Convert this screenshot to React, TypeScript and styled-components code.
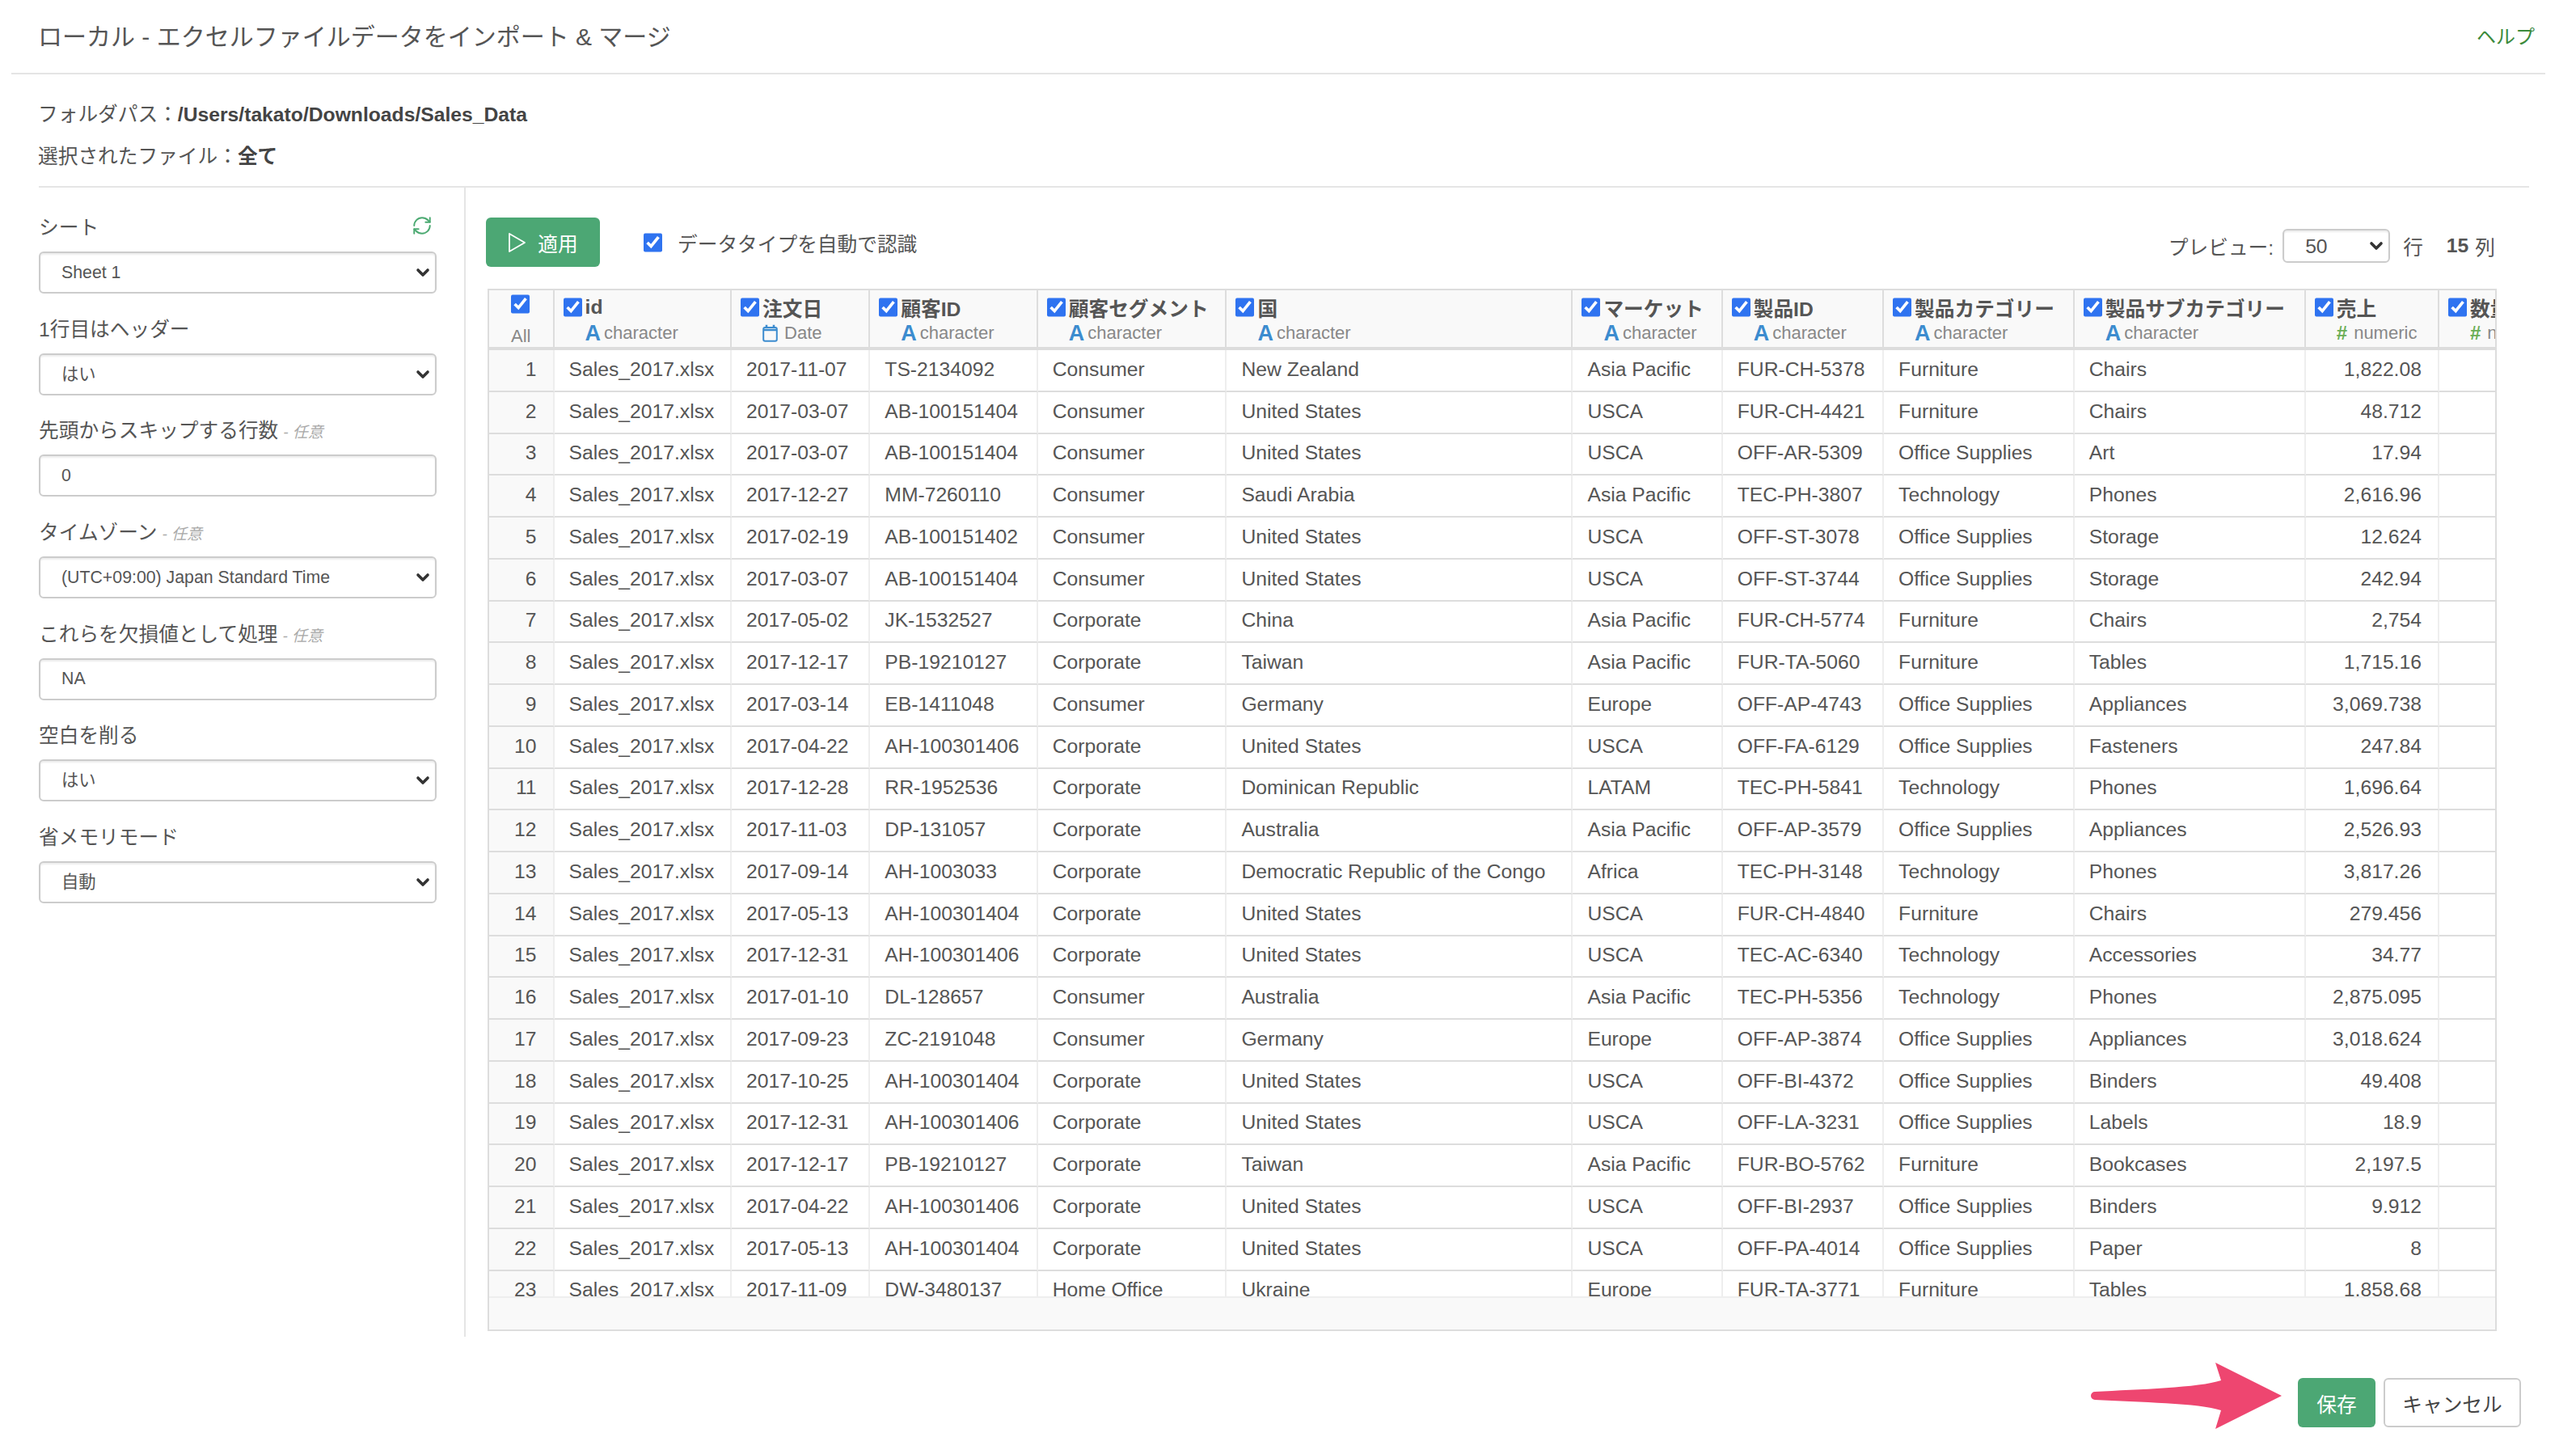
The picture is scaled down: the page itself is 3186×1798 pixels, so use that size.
import styled, { createGlobalStyle } from 'styled-components';
import { ChevronDown, RefreshCw } from 'lucide-react';

const GlobalStyle = createGlobalStyle`
  * {
    box-sizing: border-box;
  }
  html,
  body {
    margin: 0;
    padding: 0;
    background: #fff;
  }
  body {
    font-family: 'Liberation Sans', 'Noto Sans CJK JP', sans-serif;
    font-size: 24.7px;
    color: #555;
  }
`;

const Page = styled.div`
  width: 3186px;
  height: 1798px;
  overflow: hidden;
`;

const Header = styled.header`
  height: 92px;
  margin: 0 38px 0 14px;
  padding: 0 13px 4px 33px;
  border-bottom: 2px solid #e5e5e5;
  display: flex;
  align-items: center;
  justify-content: space-between;
`;

const Title = styled.h1`
  margin: 0;
  font-size: 30px;
  font-weight: 400;
  color: #555;
`;

const HelpLink = styled.a`
  font-size: 24px;
  color: #3c8a3c;
`;

const Info = styled.section`
  height: 140px;
  margin: 0 58px 0 48px;
  padding-top: 24px;
  border-bottom: 2px solid #e5e5e5;
`;

const InfoLine = styled.div`
  height: 52px;
  line-height: 52px;
  margin-left: -1px;
  strong {
    color: #444;
  }
`;

const Body = styled.div`
  height: 1421px;
  display: flex;
`;

const Sidebar = styled.aside`
  width: 576px;
  padding: 27px 34px 0 48px;
  border-right: 2px solid #e5e5e5;
`;

const Field = styled.div`
  margin-bottom: 21.7px;
`;

const FieldLabel = styled.label`
  height: 40px;
  margin-bottom: 12px;
  padding-right: 5px;
  display: flex;
  align-items: center;
  justify-content: space-between;
`;

const Optional = styled.em`
  margin-left: 6px;
  font-size: 19px;
  color: #aaa;
`;

const LabelText = styled.span`
  display: flex;
  align-items: baseline;
`;

const SelectWrap = styled.div<{ $width?: number }>`
  position: relative;
  width: ${({ $width }) => ($width ? `${$width}px` : '100%')};
  svg {
    position: absolute;
    top: 50%;
    right: 5px;
    margin-top: -12px;
    color: #333;
    pointer-events: none;
  }
`;

const Select = styled.select`
  width: 100%;
  height: 52px;
  padding: 0 26px;
  appearance: none;
  background: #fff;
  border: 2px solid #ccc;
  border-radius: 6px;
  box-shadow: inset 0 2px 2px rgba(0, 0, 0, 0.075);
  font-family: inherit;
  font-size: 21.3px;
  color: #555;
`;

const PreviewSelect = styled(Select)`
  height: 42px;
  font-size: 24.7px;
`;

const TextInput = styled.input`
  width: 100%;
  height: 52px;
  padding: 0 26px;
  background: #fff;
  border: 2px solid #ccc;
  border-radius: 6px;
  box-shadow: inset 0 2px 2px rgba(0, 0, 0, 0.075);
  font-family: inherit;
  font-size: 21.3px;
  color: #555;
`;

const Main = styled.main`
  width: 2610px;
  padding: 37px 0 0 27px;
  margin-right: 0;
`;

const Toolbar = styled.div`
  width: 2485px;
  height: 61px;
  margin: 0 0 27px -2px;
  display: flex;
  align-items: center;
`;

const Button = styled.button<{ $primary?: boolean }>`
  height: 61px;
  display: inline-flex;
  align-items: center;
  justify-content: center;
  border-radius: 6px;
  font-family: inherit;
  font-size: 24.7px;
  border: ${({ $primary }) => ($primary ? 'none' : '2px solid #ccc')};
  background: ${({ $primary }) => ($primary ? '#4ca774' : '#fff')};
  color: ${({ $primary }) => ($primary ? '#fff' : '#444')};
`;

const ApplyButton = styled(Button)`
  width: 141px;
  gap: 14px;
`;

const SaveButton = styled(Button)`
  width: 96px;
`;

const CancelButton = styled(Button)`
  width: 170px;
`;

const AutoDetect = styled.label`
  margin-left: 54px;
  display: flex;
  align-items: center;
  gap: 19px;
`;

const Check = styled.input.attrs({ type: 'checkbox', defaultChecked: true })`
  width: 23px;
  height: 24px;
  margin: 0;
  flex: none;
  accent-color: #2f73f0;
`;

const PreviewGroup = styled.div`
  margin: 9px 0 0 auto;
  display: flex;
  align-items: center;
  strong {
    margin: 0 8px 0 29px;
  }
`;

const PreviewLabel = styled.span`
  margin-right: 11px;
`;

const UnitText = styled.span`
  margin-left: 16px;
`;

const TableFrame = styled.div`
  width: 2485px;
  height: 1289px;
  border: 2px solid #ddd;
  display: flex;
  flex-direction: column;
  background: #f9f9f9;
`;

const ScrollArea = styled.div`
  flex: 1;
  min-height: 0;
  overflow: hidden;
  background: #fff;
`;

const FootBar = styled.div`
  height: 41px;
  flex: none;
  background: #f9f9f9;
  border-top: 2px solid #eee;
`;

const Grid = styled.table`
  width: 2553px;
  table-layout: fixed;
  border-collapse: separate;
  border-spacing: 0;
`;

const Col = styled.col<{ $w: number }>`
  width: ${({ $w }) => $w}px;
`;

const HeadCell = styled.th`
  height: 73px;
  padding: 9px 0 0 11px;
  vertical-align: top;
  text-align: left;
  background: #f9f9f9;
  border-right: 2px solid #ddd;
  border-bottom: 4px solid #ddd;
  font-weight: 700;
  color: #555;
  white-space: nowrap;
  overflow: hidden;
`;

const AllCell = styled(HeadCell)`
  padding: 5px 0 0 27px;
`;

const AllText = styled.div`
  width: 24px;
  margin-top: 9px;
  font-size: 22px;
  font-weight: 400;
  color: #888;
  text-align: center;
`;

const HeadName = styled.div`
  height: 24px;
  display: flex;
  align-items: center;
  gap: 4px;
`;

const TypeRow = styled.div`
  margin: 7px 0 0 27px;
  height: 26px;
  display: flex;
  align-items: center;
  gap: 4px;
  font-size: 22px;
  font-weight: 400;
  color: #888;
`;

const TypeMark = styled.span<{ $color: string }>`
  font-size: 27px;
  font-weight: 700;
  color: ${({ $color }) => $color};
`;

const NumberMark = styled(TypeMark)`
  margin-right: 4px;
  font-size: 24px;
`;

const DateMark = styled.svg`
  width: 19px;
  height: 22px;
  margin-right: 4px;
  color: #3c8ccf;
`;

const Cell = styled.td<{ $right?: boolean }>`
  height: 51.75px;
  padding: 0 ${({ $right }) => ($right ? '20px' : '0 0 18px')};
  padding-bottom: 2px;
  border-right: 2px solid #eee;
  border-bottom: 2px solid #ddd;
  text-align: ${({ $right }) => ($right ? 'right' : 'left')};
  white-space: nowrap;
  overflow: hidden;
`;

const IndexCell = styled(Cell)`
  background: #f9f9f9;
`;

const Footer = styled.footer`
  position: relative;
  padding: 51px 68px 0 0;
  display: flex;
  justify-content: flex-end;
  gap: 10px;
`;

const Arrow = styled.svg`
  position: absolute;
  top: 31px;
  left: 2585px;
  width: 240px;
  height: 84px;
`;

type ColumnType = 'character' | 'Date' | 'numeric';

const columns: { name: string; type: ColumnType; width: number }[] = [
  { name: 'id', type: 'character', width: 218 },
  { name: '注文日', type: 'Date', width: 170 },
  { name: '顧客ID', type: 'character', width: 206 },
  { name: '顧客セグメント', type: 'character', width: 232 },
  { name: '国', type: 'character', width: 425 },
  { name: 'マーケット', type: 'character', width: 184 },
  { name: '製品ID', type: 'character', width: 198 },
  { name: '製品カテゴリー', type: 'character', width: 234 },
  { name: '製品サブカテゴリー', type: 'character', width: 284 },
  { name: '売上', type: 'numeric', width: 164 },
  { name: '数量', type: 'numeric', width: 140 },
];

const rows = [
  ['2017-11-07', 'TS-2134092', 'Consumer', 'New Zealand', 'Asia Pacific', 'FUR-CH-5378', 'Furniture', 'Chairs', '1,822.08'],
  ['2017-03-07', 'AB-100151404', 'Consumer', 'United States', 'USCA', 'FUR-CH-4421', 'Furniture', 'Chairs', '48.712'],
  ['2017-03-07', 'AB-100151404', 'Consumer', 'United States', 'USCA', 'OFF-AR-5309', 'Office Supplies', 'Art', '17.94'],
  ['2017-12-27', 'MM-7260110', 'Consumer', 'Saudi Arabia', 'Asia Pacific', 'TEC-PH-3807', 'Technology', 'Phones', '2,616.96'],
  ['2017-02-19', 'AB-100151402', 'Consumer', 'United States', 'USCA', 'OFF-ST-3078', 'Office Supplies', 'Storage', '12.624'],
  ['2017-03-07', 'AB-100151404', 'Consumer', 'United States', 'USCA', 'OFF-ST-3744', 'Office Supplies', 'Storage', '242.94'],
  ['2017-05-02', 'JK-1532527', 'Corporate', 'China', 'Asia Pacific', 'FUR-CH-5774', 'Furniture', 'Chairs', '2,754'],
  ['2017-12-17', 'PB-19210127', 'Corporate', 'Taiwan', 'Asia Pacific', 'FUR-TA-5060', 'Furniture', 'Tables', '1,715.16'],
  ['2017-03-14', 'EB-1411048', 'Consumer', 'Germany', 'Europe', 'OFF-AP-4743', 'Office Supplies', 'Appliances', '3,069.738'],
  ['2017-04-22', 'AH-100301406', 'Corporate', 'United States', 'USCA', 'OFF-FA-6129', 'Office Supplies', 'Fasteners', '247.84'],
  ['2017-12-28', 'RR-1952536', 'Corporate', 'Dominican Republic', 'LATAM', 'TEC-PH-5841', 'Technology', 'Phones', '1,696.64'],
  ['2017-11-03', 'DP-131057', 'Corporate', 'Australia', 'Asia Pacific', 'OFF-AP-3579', 'Office Supplies', 'Appliances', '2,526.93'],
  ['2017-09-14', 'AH-1003033', 'Corporate', 'Democratic Republic of the Congo', 'Africa', 'TEC-PH-3148', 'Technology', 'Phones', '3,817.26'],
  ['2017-05-13', 'AH-100301404', 'Corporate', 'United States', 'USCA', 'FUR-CH-4840', 'Furniture', 'Chairs', '279.456'],
  ['2017-12-31', 'AH-100301406', 'Corporate', 'United States', 'USCA', 'TEC-AC-6340', 'Technology', 'Accessories', '34.77'],
  ['2017-01-10', 'DL-128657', 'Consumer', 'Australia', 'Asia Pacific', 'TEC-PH-5356', 'Technology', 'Phones', '2,875.095'],
  ['2017-09-23', 'ZC-2191048', 'Consumer', 'Germany', 'Europe', 'OFF-AP-3874', 'Office Supplies', 'Appliances', '3,018.624'],
  ['2017-10-25', 'AH-100301404', 'Corporate', 'United States', 'USCA', 'OFF-BI-4372', 'Office Supplies', 'Binders', '49.408'],
  ['2017-12-31', 'AH-100301406', 'Corporate', 'United States', 'USCA', 'OFF-LA-3231', 'Office Supplies', 'Labels', '18.9'],
  ['2017-12-17', 'PB-19210127', 'Corporate', 'Taiwan', 'Asia Pacific', 'FUR-BO-5762', 'Furniture', 'Bookcases', '2,197.5'],
  ['2017-04-22', 'AH-100301406', 'Corporate', 'United States', 'USCA', 'OFF-BI-2937', 'Office Supplies', 'Binders', '9.912'],
  ['2017-05-13', 'AH-100301404', 'Corporate', 'United States', 'USCA', 'OFF-PA-4014', 'Office Supplies', 'Paper', '8'],
  ['2017-11-09', 'DW-3480137', 'Home Office', 'Ukraine', 'Europe', 'FUR-TA-3771', 'Furniture', 'Tables', '1,858.68'],
];

const TypeIcon = ({ type }: { type: ColumnType }) => {
  if (type === 'character') return <TypeMark $color="#3c8ccf">A</TypeMark>;
  if (type === 'numeric') return <NumberMark $color="#6aae55">#</NumberMark>;
  return (
    <DateMark viewBox="0 0 19 22" fill="none" stroke="currentColor">
      <rect x="1.2" y="4" width="16.6" height="16.8" rx="2" strokeWidth="2" />
      <path d="M1.5 7h16" strokeWidth="2.5" />
      <path d="M5 .8v4M14 .8v4" strokeWidth="2.6" />
    </DateMark>
  );
};

const SelectBox = ({ value, options }: { value: string; options?: string[] }) => (
  <SelectWrap>
    <Select defaultValue={value}>
      {(options ?? [value]).map((o) => (
        <option key={o}>{o}</option>
      ))}
    </Select>
    <ChevronDown size={24} strokeWidth={3.6} />
  </SelectWrap>
);

const App = () => {
  return (
    <Page>
      <GlobalStyle />
      <Header>
        <Title>ローカル - エクセルファイルデータをインポート &amp; マージ</Title>
        <HelpLink>ヘルプ</HelpLink>
      </Header>
      <Info>
        <InfoLine>
          フォルダパス：<strong>/Users/takato/Downloads/Sales_Data</strong>
        </InfoLine>
        <InfoLine>
          選択されたファイル：<strong>全て</strong>
        </InfoLine>
      </Info>
      <Body>
        <Sidebar>
          <Field>
            <FieldLabel>
              シート
              <RefreshCw size={26} strokeWidth={1.8} color="#4caa72" />
            </FieldLabel>
            <SelectBox value="Sheet 1" />
          </Field>
          <Field>
            <FieldLabel>1行目はヘッダー</FieldLabel>
            <SelectBox value="はい" />
          </Field>
          <Field>
            <FieldLabel>
              <LabelText>
                先頭からスキップする行数<Optional>- 任意</Optional>
              </LabelText>
            </FieldLabel>
            <TextInput defaultValue="0" />
          </Field>
          <Field>
            <FieldLabel>
              <LabelText>
                タイムゾーン<Optional>- 任意</Optional>
              </LabelText>
            </FieldLabel>
            <SelectBox value="(UTC+09:00) Japan Standard Time" />
          </Field>
          <Field>
            <FieldLabel>
              <LabelText>
                これらを欠損値として処理<Optional>- 任意</Optional>
              </LabelText>
            </FieldLabel>
            <TextInput defaultValue="NA" />
          </Field>
          <Field>
            <FieldLabel>空白を削る</FieldLabel>
            <SelectBox value="はい" />
          </Field>
          <Field>
            <FieldLabel>省メモリモード</FieldLabel>
            <SelectBox value="自動" />
          </Field>
        </Sidebar>
        <Main>
          <Toolbar>
            <ApplyButton $primary>
              <svg width="23" height="26" viewBox="0 0 23 26" fill="none" stroke="#fff" strokeWidth="1.8" strokeLinejoin="round">
                <path d="M2 2l19 11L2 24z" />
              </svg>
              適用
            </ApplyButton>
            <AutoDetect>
              <Check />
              データタイプを自動で認識
            </AutoDetect>
            <PreviewGroup>
              <PreviewLabel>プレビュー:</PreviewLabel>
              <SelectWrap $width={133}>
                <PreviewSelect defaultValue="50">
                  <option>50</option>
                  <option>100</option>
                </PreviewSelect>
                <ChevronDown size={24} strokeWidth={3.6} />
              </SelectWrap>
              <UnitText>行</UnitText>
              <strong>15</strong>
              列
            </PreviewGroup>
          </Toolbar>
          <TableFrame>
            <ScrollArea>
              <Grid>
                <colgroup>
                  <Col $w={80} />
                  {columns.map((c) => (
                    <Col key={c.name} $w={c.width} />
                  ))}
                </colgroup>
                <thead>
                  <tr>
                    <AllCell>
                      <Check />
                      <AllText>All</AllText>
                    </AllCell>
                    {columns.map((c) => (
                      <HeadCell key={c.name}>
                        <HeadName>
                          <Check />
                          {c.name}
                        </HeadName>
                        <TypeRow>
                          <TypeIcon type={c.type} />
                          {c.type}
                        </TypeRow>
                      </HeadCell>
                    ))}
                  </tr>
                </thead>
                <tbody>
                  {rows.map((row, i) => (
                    <tr key={i}>
                      <IndexCell $right>{i + 1}</IndexCell>
                      <Cell>Sales_2017.xlsx</Cell>
                      {row.map((value, j) => (
                        <Cell key={j} $right={j === row.length - 1}>
                          {value}
                        </Cell>
                      ))}
                      <Cell />
                    </tr>
                  ))}
                </tbody>
              </Grid>
            </ScrollArea>
            <FootBar />
          </TableFrame>
        </Main>
      </Body>
      <Footer>
        <Arrow viewBox="0 0 240 84">
          <path
            d="M6 37C60 34 135 32 162 23L155 1l82 41-82 41 7-23C135 51 60 50 6 47a5 5 0 0 1 0-10z"
            fill="#ee4670"
          />
        </Arrow>
        <SaveButton $primary>保存</SaveButton>
        <CancelButton>キャンセル</CancelButton>
      </Footer>
    </Page>
  );
};

export default App;
